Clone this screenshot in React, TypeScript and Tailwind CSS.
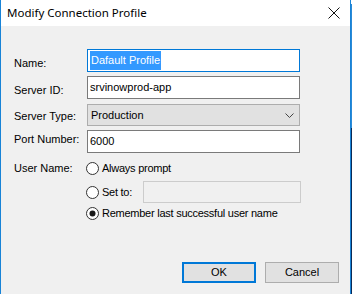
import React from "react";

const Radio = ({ checked }: { checked?: boolean }) => (
  <svg width="13" height="13" viewBox="0 0 13 13" className="shrink-0">
    <circle cx="6.5" cy="6.5" r="6" fill="#ffffff" stroke="#333333" strokeWidth="1" />
    {checked && <circle cx="6.5" cy="6.5" r="3" fill="#1a1a1a" />}
  </svg>
);

export default function App() {
  const font = { fontFamily: '"Liberation Sans", Arial, sans-serif' };
  return (
    <div className="w-[352px] h-[294px] flex overflow-hidden bg-[#f0f0f0]">
      <div className="w-[351px] h-full flex flex-col border-l border-r border-[#1883d7] bg-[#f0f0f0]">
        {/* Title bar */}
        <div className="h-[26px] bg-white flex items-center justify-between pl-[6px] pr-[10px] shrink-0">
          <span
            className="text-[11.5px] text-black leading-none"
            style={{ fontFamily: '"Noto Sans", sans-serif' }}
          >
            Modify Connection Profile
          </span>
          <svg width="12" height="12" viewBox="0 0 12 12">
            <path d="M0.5 0.5 L11.5 11.5 M11.5 0.5 L0.5 11.5" stroke="#111" strokeWidth="1" />
          </svg>
        </div>
        {/* Body */}
        <div className="flex-1 flex flex-col pl-[13px] text-[11px] text-black" style={font}>
          <div className="flex items-center mt-[23px] h-[23px]">
            <span className="w-[73px] pt-[6px]">Name:</span>
            <div className="w-[213px] h-[23px] border border-[#0078d7] bg-white flex items-center pl-[2px]">
              <span className="bg-[#3399ff] text-white h-[19px] flex items-center px-[1px]">Dafault Profile</span>
            </div>
          </div>
          <div className="flex items-center mt-[4px] h-[23px]">
            <span className="w-[73px] pt-[5px]">Server ID:</span>
            <div className="w-[213px] h-[23px] border border-[#7a7a7a] bg-white flex items-center pl-[2px]">
              srvinowprod-app
            </div>
          </div>
          <div className="flex items-center mt-[5px] h-[22px]">
            <span className="w-[73px] pt-[2px]">Server Type:</span>
            <div className="w-[213px] h-[22px] border border-[#adadad] bg-[#e1e1e1] flex items-center justify-between pl-[3px] pr-[5px]">
              <span>Production</span>
              <svg width="9" height="5" viewBox="0 0 9 5">
                <path d="M0.5 0.5 L4.5 4.5 L8.5 0.5" stroke="#444" strokeWidth="1" fill="none" />
              </svg>
            </div>
          </div>
          <div className="flex items-center mt-[4px] h-[23px]">
            <span className="w-[73px] pb-[4px]">Port Number:</span>
            <div className="w-[213px] h-[23px] border border-[#7a7a7a] bg-white flex items-center pl-[2px]">
              6000
            </div>
          </div>
          <div className="flex mt-[7px]">
            <span className="w-[72px] h-[16px] flex items-center">User Name:</span>
            <div className="flex flex-col tracking-[-0.25px]">
              <div className="flex items-center h-[16px] gap-[3px]">
                <Radio />
                <span>Always prompt</span>
              </div>
              <div className="flex items-center mt-[5px] h-[22px]">
                <Radio />
                <span className="ml-[3px] w-[41px]">Set to:</span>
                <div className="w-[158px] h-[22px] border border-[#cccccc] bg-[#f0f0f0]" />
              </div>
              <div className="flex items-center mt-[2px] h-[16px] gap-[3px]">
                <Radio checked />
                <span>Remember last successful user name</span>
              </div>
            </div>
          </div>
          <div className="flex justify-end gap-[9px] mt-auto mb-[11px] pr-[11px]">
            <div className="w-[74px] h-[21px] border-2 border-[#0078d7] bg-[#e1e1e1] flex items-center justify-center">
              OK
            </div>
            <div className="w-[74px] h-[21px] border border-[#adadad] bg-[#e1e1e1] flex items-center justify-center">
              Cancel
            </div>
          </div>
        </div>
      </div>
      <div className="w-[1px] h-full flex flex-col">
        <div className="h-[4px] bg-white" />
        <div className="h-[124px] bg-[#2b8ad6]" />
        <div className="flex-1 bg-[#0b2a55]" />
      </div>
    </div>
  );
}
